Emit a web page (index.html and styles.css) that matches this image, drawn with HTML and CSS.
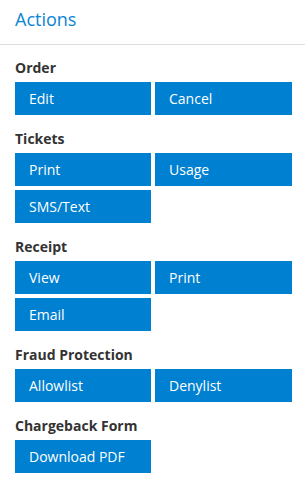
FILE: index.html
```html
<!DOCTYPE html>
<html>
<head>
  <link rel="stylesheet" href="styles.css">
</head>
<body>
  <div class="panel">
    <div class="panel-header">Actions</div>
    <div class="panel-body">
      <div class="group">
        <div class="group-label">Order</div>
        <div class="buttons">
          <button class="btn">Edit</button>
          <button class="btn">Cancel</button>
        </div>
      </div>
      <div class="group">
        <div class="group-label">Tickets</div>
        <div class="buttons">
          <button class="btn">Print</button>
          <button class="btn">Usage</button>
          <button class="btn">SMS/Text</button>
        </div>
      </div>
      <div class="group">
        <div class="group-label">Receipt</div>
        <div class="buttons">
          <button class="btn">View</button>
          <button class="btn">Print</button>
          <button class="btn">Email</button>
        </div>
      </div>
      <div class="group">
        <div class="group-label">Fraud Protection</div>
        <div class="buttons">
          <button class="btn">Allowlist</button>
          <button class="btn">Denylist</button>
        </div>
      </div>
      <div class="group">
        <div class="group-label">Chargeback Form</div>
        <div class="buttons">
          <button class="btn">Download PDF</button>
        </div>
      </div>
    </div>
  </div>
</body>
</html>
```

FILE: styles.css
```css
body { margin: 0; background: #fff; font-family: "Open Sans", sans-serif; }
.panel { width: 305px; }
.panel-header {
  padding: 7px 15px 13px;
  font-size: 18px;
  line-height: 24px;
  color: #0a84d4;
  border-bottom: 1px solid #dddddd;
}
.panel-body { padding: 13px 13px 0 15px; }
.group { margin-bottom: 14px; }
.group-label {
  font-size: 14px;
  line-height: 20px;
  font-weight: 700;
  color: #333;
  margin-bottom: 4px;
}
.buttons {
  display: grid;
  grid-template-columns: 136px 137px;
  gap: 4px;
}
.btn {
  height: 33px;
  padding: 0 14px;
  border: 0;
  background-color: #0080d0;
  color: #fff;
  font-family: "Open Sans", sans-serif;
  font-size: 14px;
  line-height: 21px;
  text-align: left;
  cursor: pointer;
}
```
